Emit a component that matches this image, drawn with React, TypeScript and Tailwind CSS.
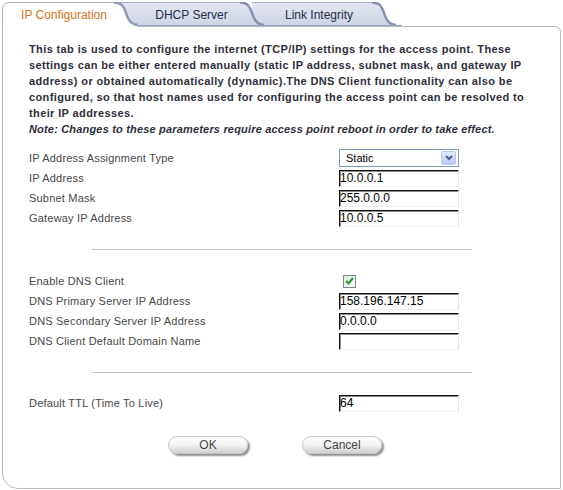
import React from 'react'

const Tabs: React.FC = () => {
  return (
    <div className="relative z-10 h-[25px] w-[559px]">
      <svg className="absolute inset-0" width="559" height="25" viewBox="0 0 559 25">
        <defs>
          <linearGradient id="tabOff" x1="0" y1="0" x2="0" y2="1">
            <stop offset="0" stopColor="#e2e6f0" />
            <stop offset="1" stopColor="#cdd4e3" />
          </linearGradient>
        </defs>
        {/* link integrity */}
        <path d="M250 24 L250 0.5 L370 0.5 C378 0.5 380 5 382 11 C384 18 387 23.5 394 23.5 L394 24 Z" fill="url(#tabOff)" />
        <path d="M250 0.5 L370 0.5" stroke="#a9b2c5" strokeWidth="1" fill="none" />
        <path d="M370 0.5 C378 0.5 380 5 382 11 C384 18 387 23 394 23" stroke="#8793ae" strokeWidth="2.5" fill="none" />
        {/* dhcp */}
        <path d="M118 24 L118 0.5 L238 0.5 C246 0.5 248 5 250 11 C252 18 255 23.5 262 23.5 L262 24 Z" fill="url(#tabOff)" />
        <path d="M118 0.5 L238 0.5" stroke="#a9b2c5" strokeWidth="1" fill="none" />
        <path d="M238 0.5 C246 0.5 248 5 250 11 C252 18 255 23 262 23" stroke="#8793ae" strokeWidth="2.5" fill="none" />
        <path d="M110 23.5 L400 23.5" stroke="#9aa5bb" strokeWidth="1" fill="none" />
        {/* active */}
        <path d="M0.5 25 L0.5 8 Q0.5 0.5 8 0.5 L112 0.5 C120 0.5 122 5 124 11 C126 18 129 23.5 136 23.5 L136 25 Z" fill="#ffffff" />
        <path d="M0.5 25 L0.5 8 Q0.5 0.5 8 0.5 L112 0.5" stroke="#a6adbb" strokeWidth="1" fill="none" />
        <path d="M112 0.5 C120 0.5 122 5 124 11 C126 18 129 23 136 23" stroke="#8f9bb4" strokeWidth="2.5" fill="none" />
      </svg>
      <div className="relative flex h-full items-center pt-[1px] text-[12px]">
        <div className="w-[124px] text-center text-[#d4731c]">IP Configuration</div>
        <div className="w-[131px] text-center text-[#27304a]">DHCP Server</div>
        <div className="w-[124px] text-center text-[#27304a]">Link Integrity</div>
      </div>
    </div>
  )
}

const TextBox: React.FC<{ value: string }> = ({ value }) => (
  <div className="h-[17px] w-[120px] border-t border-l border-r border-b border-t-[#111] border-l-[#111] border-r-[#e2e2e2] border-b-[#f0f0f0] bg-white text-[12px] leading-[15px] text-black shadow-[inset_1px_1px_0_#8a8a8a]">
    {value}
  </div>
)

const Row: React.FC<{ label: string; children?: React.ReactNode }> = ({ label, children }) => (
  <div className="flex h-[20px] items-center">
    <div className="w-[310px] text-[11px] tracking-[0.2px] text-[#484848]">{label}</div>
    <div>{children}</div>
  </div>
)

const Sep: React.FC = () => (
  <div className="ml-[63px] w-[380px] border-t border-[#c4c4c4]" />
)

const Btn: React.FC<{ label: string }> = ({ label }) => (
  <button className="h-[18px] w-[80px] rounded-full border border-[#c6c6c6] bg-gradient-to-b from-white via-[#f3f3f3] to-[#d0d0d0] text-[12px] leading-[16px] text-[#444] shadow-[2px_2px_2px_#8e8e8e]">
    {label}
  </button>
)

const App: React.FC = () => {
  return (
    <div className="h-[490px] w-[563px] overflow-hidden bg-white pl-[2px] pt-[2px] font-['Liberation_Sans',Arial,sans-serif]">
      <Tabs />
      <div className="-mt-px h-[463px] w-[559px] rounded-tr-[6px] rounded-bl-[16px] border border-[#b4b9c4] pl-[26px] pt-[14px]">
        <div className="text-[11px] font-bold leading-[16px] tracking-[0.38px] text-[#2e2e3a]">
          <div>This tab is used to configure the internet (TCP/IP) settings for the access point. These</div>
          <div>settings can be either entered manually (static IP address, subnet mask, and gateway IP</div>
          <div>address) or obtained automatically (dynamic).The DNS Client functionality can also be</div>
          <div>configured, so that host names used for configuring the access point can be resolved to</div>
          <div>their IP addresses.</div>
        </div>
        <div className="text-[11px] font-bold italic leading-[16px] tracking-[0.18px] text-[#2e2e3a]">
          Note: Changes to these parameters require access point reboot in order to take effect.
        </div>

        <div className="mt-[11px] flex flex-col">
          <Row label="IP Address Assignment Type">
            <div className="flex h-[18px] w-[120px] items-center justify-between border border-[#7f9db9] bg-white pl-[6px] pr-[2px] text-[11px] text-black">
              <span>Static</span>
              <span className="flex h-[14px] w-[15px] items-center justify-center rounded-[2px] border border-[#b7c9f2] bg-gradient-to-b from-[#e4ecfd] to-[#b3c7f3]">
                <svg width="8" height="6" viewBox="0 0 8 6">
                  <path d="M1 1 L4 4 L7 1" stroke="#4d6185" strokeWidth="2" fill="none" />
                </svg>
              </span>
            </div>
          </Row>
          <Row label="IP Address"><TextBox value="10.0.0.1" /></Row>
          <Row label="Subnet Mask"><TextBox value="255.0.0.0" /></Row>
          <Row label="Gateway IP Address"><TextBox value="10.0.0.5" /></Row>
        </div>

        <div className="mt-[21px]"><Sep /></div>

        <div className="mt-[21px] flex flex-col">
          <Row label="Enable DNS Client">
            <div className="ml-[4px] flex h-[13px] w-[13px] items-center justify-center border border-[#7a8595] bg-gradient-to-br from-[#e6e6e0] to-[#fbfbf8]">
              <svg width="9" height="8" viewBox="0 0 9 8">
                <path d="M1 4 L3.5 6.5 L8 1" stroke="#21a121" strokeWidth="2" fill="none" />
              </svg>
            </div>
          </Row>
          <Row label="DNS Primary Server IP Address"><TextBox value="158.196.147.15" /></Row>
          <Row label="DNS Secondary Server IP Address"><TextBox value="0.0.0.0" /></Row>
          <Row label="DNS Client Default Domain Name"><TextBox value="" /></Row>
        </div>

        <div className="mt-[21px]"><Sep /></div>

        <div className="mt-[20px]">
          <Row label="Default TTL (Time To Live)"><TextBox value="64" /></Row>
        </div>

        <div className="ml-[139px] mt-[23px] flex gap-[54px]">
          <Btn label="OK" />
          <Btn label="Cancel" />
        </div>
      </div>
    </div>
  )
}

export default App
